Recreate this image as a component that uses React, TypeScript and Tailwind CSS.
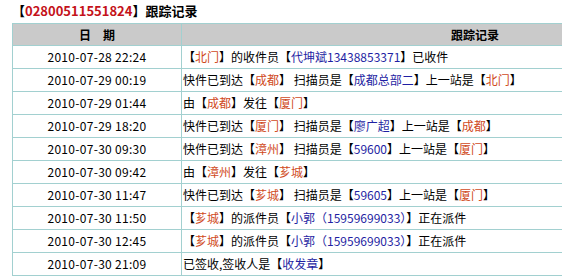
const O = ({ children }: { children: React.ReactNode }) => (
  <span className="text-[#d04a1c]">{children}</span>
);
const B = ({ children }: { children: React.ReactNode }) => (
  <span className="text-[#1f1fa3]">{children}</span>
);

const rows: { time: string; text: React.ReactNode }[] = [
  {
    time: "2010-07-28 22:24",
    text: (
      <>
        【<O>北门</O>】的收件员【<B>代坤斌13438853371</B>】已收件
      </>
    ),
  },
  {
    time: "2010-07-29 00:19",
    text: (
      <>
        快件已到达【<O>成都</O>】 扫描员是【<B>成都总部二</B>】上一站是【<O>北门</O>】
      </>
    ),
  },
  {
    time: "2010-07-29 01:44",
    text: (
      <>
        由【<O>成都</O>】发往【<O>厦门</O>】
      </>
    ),
  },
  {
    time: "2010-07-29 18:20",
    text: (
      <>
        快件已到达【<O>厦门</O>】 扫描员是【<B>廖广超</B>】上一站是【<O>成都</O>】
      </>
    ),
  },
  {
    time: "2010-07-30 09:30",
    text: (
      <>
        快件已到达【<O>漳州</O>】 扫描员是【<B>59600</B>】上一站是【<O>厦门</O>】
      </>
    ),
  },
  {
    time: "2010-07-30 09:42",
    text: (
      <>
        由【<O>漳州</O>】发往【<O>芗城</O>】
      </>
    ),
  },
  {
    time: "2010-07-30 11:47",
    text: (
      <>
        快件已到达【<O>芗城</O>】 扫描员是【<B>59605</B>】上一站是【<O>厦门</O>】
      </>
    ),
  },
  {
    time: "2010-07-30 11:50",
    text: (
      <>
        【<O>芗城</O>】的派件员【<B>小郭（15959699033）</B>】正在派件
      </>
    ),
  },
  {
    time: "2010-07-30 12:45",
    text: (
      <>
        【<O>芗城</O>】的派件员【<B>小郭（15959699033）</B>】正在派件
      </>
    ),
  },
  {
    time: "2010-07-30 21:09",
    text: (
      <>
        已签收,签收人是【<B>收发章</B>】
      </>
    ),
  },
];

export default function App() {
  return (
    <div className="w-[562px] h-[279px] overflow-hidden bg-white text-black font-['Noto_Sans_CJK_SC','Noto_Sans',sans-serif] text-[12px]">
      <div className="pl-3 h-[23px] leading-[22px] font-bold text-[13px]">
        【<span className="text-[#c4121a]">02800511551824</span>】跟踪记录
      </div>
      <table className="ml-3 w-[757px] border-collapse table-fixed">
        <thead>
          <tr className="bg-[#cacaca]">
            <th className="w-[169px] h-[22px] border border-[#a2d0d0] font-bold text-center p-0">
              日　期
            </th>
            <th className="h-[22px] border border-[#a2d0d0] font-bold text-center p-0">
              跟踪记录
            </th>
          </tr>
        </thead>
        <tbody>
          {rows.map((r) => (
            <tr key={r.time}>
              <td className="h-[23px] border border-[#a2d0d0] text-center p-0 whitespace-nowrap tracking-[0.3px]">
                {r.time}
              </td>
              <td className="h-[23px] border border-[#a2d0d0] text-left pl-[1px] py-0 whitespace-nowrap">
                {r.text}
              </td>
            </tr>
          ))}
        </tbody>
      </table>
    </div>
  );
}
